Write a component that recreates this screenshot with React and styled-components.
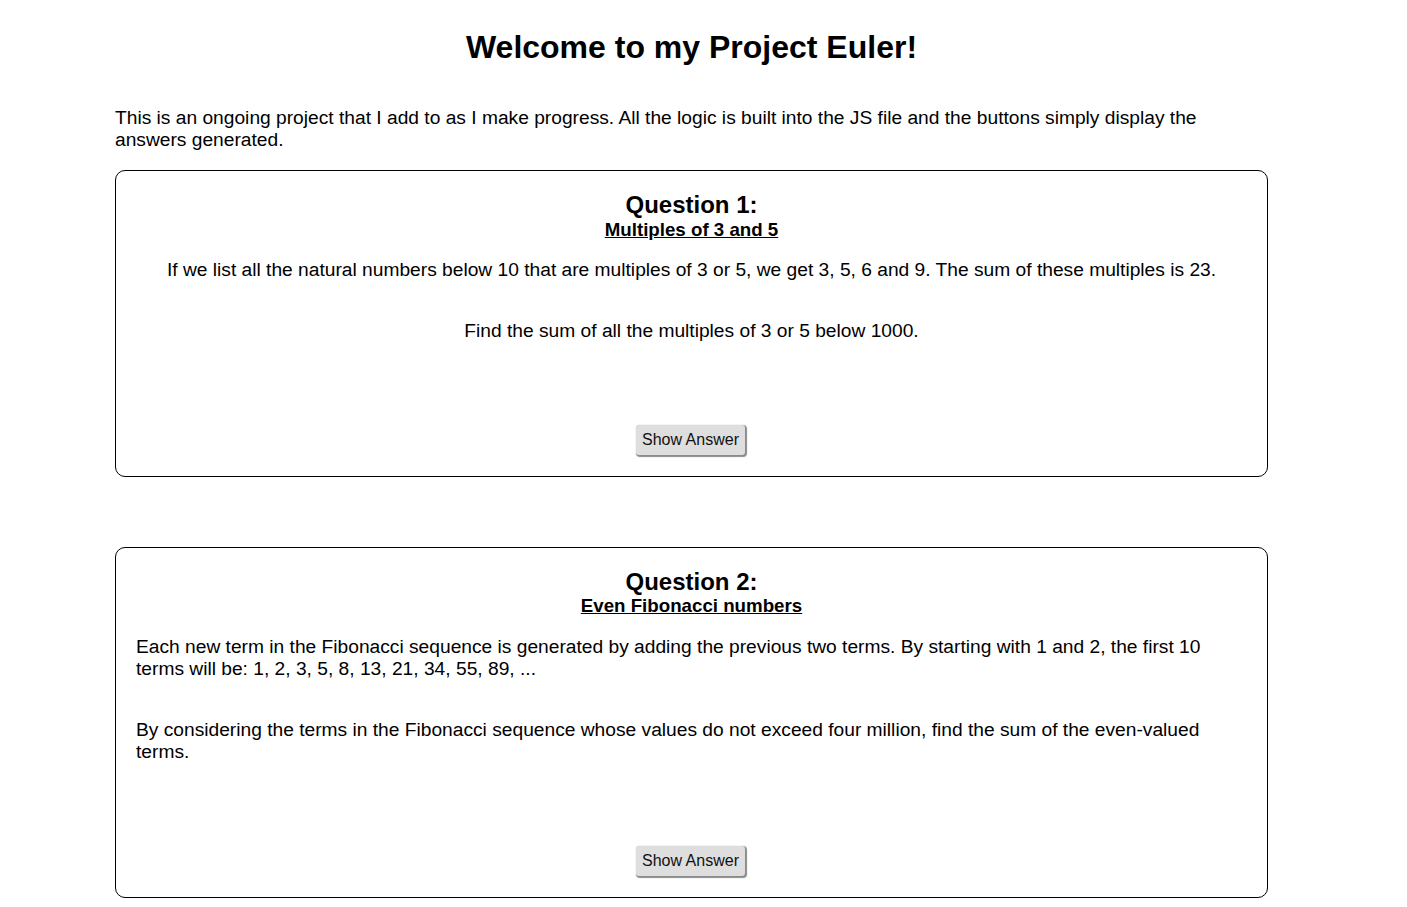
import React, { useState } from 'react';
import styled, { createGlobalStyle } from 'styled-components';

const GlobalStyle = createGlobalStyle`
  body {
    margin: 0;
    background: #fff;
    color: #000;
    font-family: "Liberation Sans", Arial, sans-serif;
  }
`;

const Page = styled.div`
  width: 1153px;
  margin-left: 115px;
  padding-bottom: 40px;
`;

const Title = styled.h1`
  margin: 29px 0 0;
  font-size: 32px;
  line-height: 37px;
  text-align: center;
`;

const Intro = styled.p`
  margin: 41px 0 19px;
  font-size: 19.2px;
  line-height: 22px;
`;

const Card = styled.section`
  display: flex;
  flex-direction: column;
  align-items: stretch;
  border: 1px solid #000;
  border-radius: 10px;
  padding: 20px 20px 21px;
  margin-bottom: 70px;
  text-align: ${props => (props.centered ? 'center' : 'left')};
`;

const QuestionNo = styled.h2`
  margin: 0;
  font-size: 24px;
  line-height: 27.6px;
  text-align: center;
`;

const QuestionName = styled.h3`
  margin: 0;
  font-size: 18.72px;
  line-height: 21.5px;
  text-decoration: underline;
  text-align: center;
`;

const Text = styled.p`
  margin: 19.2px 0;
  font-size: 19.2px;
  line-height: 22px;
`;

const Answer = styled.p`
  margin: 0;
  min-height: 64px;
  font-size: 19.2px;
  line-height: 22px;
  text-align: center;
`;

const ButtonRow = styled.div`
  display: flex;
  justify-content: center;
`;

const Button = styled.button`
  font-family: "Liberation Sans", Arial, sans-serif;
  font-size: 16px;
  line-height: 18px;
  color: #111;
  background: #dedede;
  border: none;
  border-radius: 3px;
  padding: 6px 6px 6px;
  margin-right: 2px;
  box-shadow: 1px 1px 1px 1px #8a8a8a;
  cursor: pointer;
`;

const questions = [
  {
    no: 1,
    name: 'Multiples of 3 and 5',
    centered: true,
    text: [
      'If we list all the natural numbers below 10 that are multiples of 3 or 5, we get 3, 5, 6 and 9. The sum of these multiples is 23.',
      'Find the sum of all the multiples of 3 or 5 below 1000.'
    ],
    answer: 233168
  },
  {
    no: 2,
    name: 'Even Fibonacci numbers',
    centered: false,
    text: [
      'Each new term in the Fibonacci sequence is generated by adding the previous two terms. By starting with 1 and 2, the first 10 terms will be: 1, 2, 3, 5, 8, 13, 21, 34, 55, 89, ...',
      'By considering the terms in the Fibonacci sequence whose values do not exceed four million, find the sum of the even-valued terms.'
    ],
    answer: 4613732
  }
];

const Question = ({ q }) => {
  const [shown, setShown] = useState(false);
  return (
    <Card centered={q.centered}>
      <QuestionNo>Question {q.no}:</QuestionNo>
      <QuestionName>{q.name}</QuestionName>
      {q.text.map((t, idx) => (
        <Text key={idx}>{t}</Text>
      ))}
      <Answer>{shown ? q.answer : ''}</Answer>
      <ButtonRow>
        <Button onClick={() => setShown(!shown)}>Show Answer</Button>
      </ButtonRow>
    </Card>
  );
};

const App = () => (
  <>
    <GlobalStyle />
    <Page>
      <Title>Welcome to my Project Euler!</Title>
      <Intro>
        This is an ongoing project that I add to as I make progress. All the
        logic is built into the JS file and the buttons simply display the
        answers generated.
      </Intro>
      {questions.map(q => (
        <Question key={q.no} q={q} />
      ))}
    </Page>
  </>
);

export default App;
